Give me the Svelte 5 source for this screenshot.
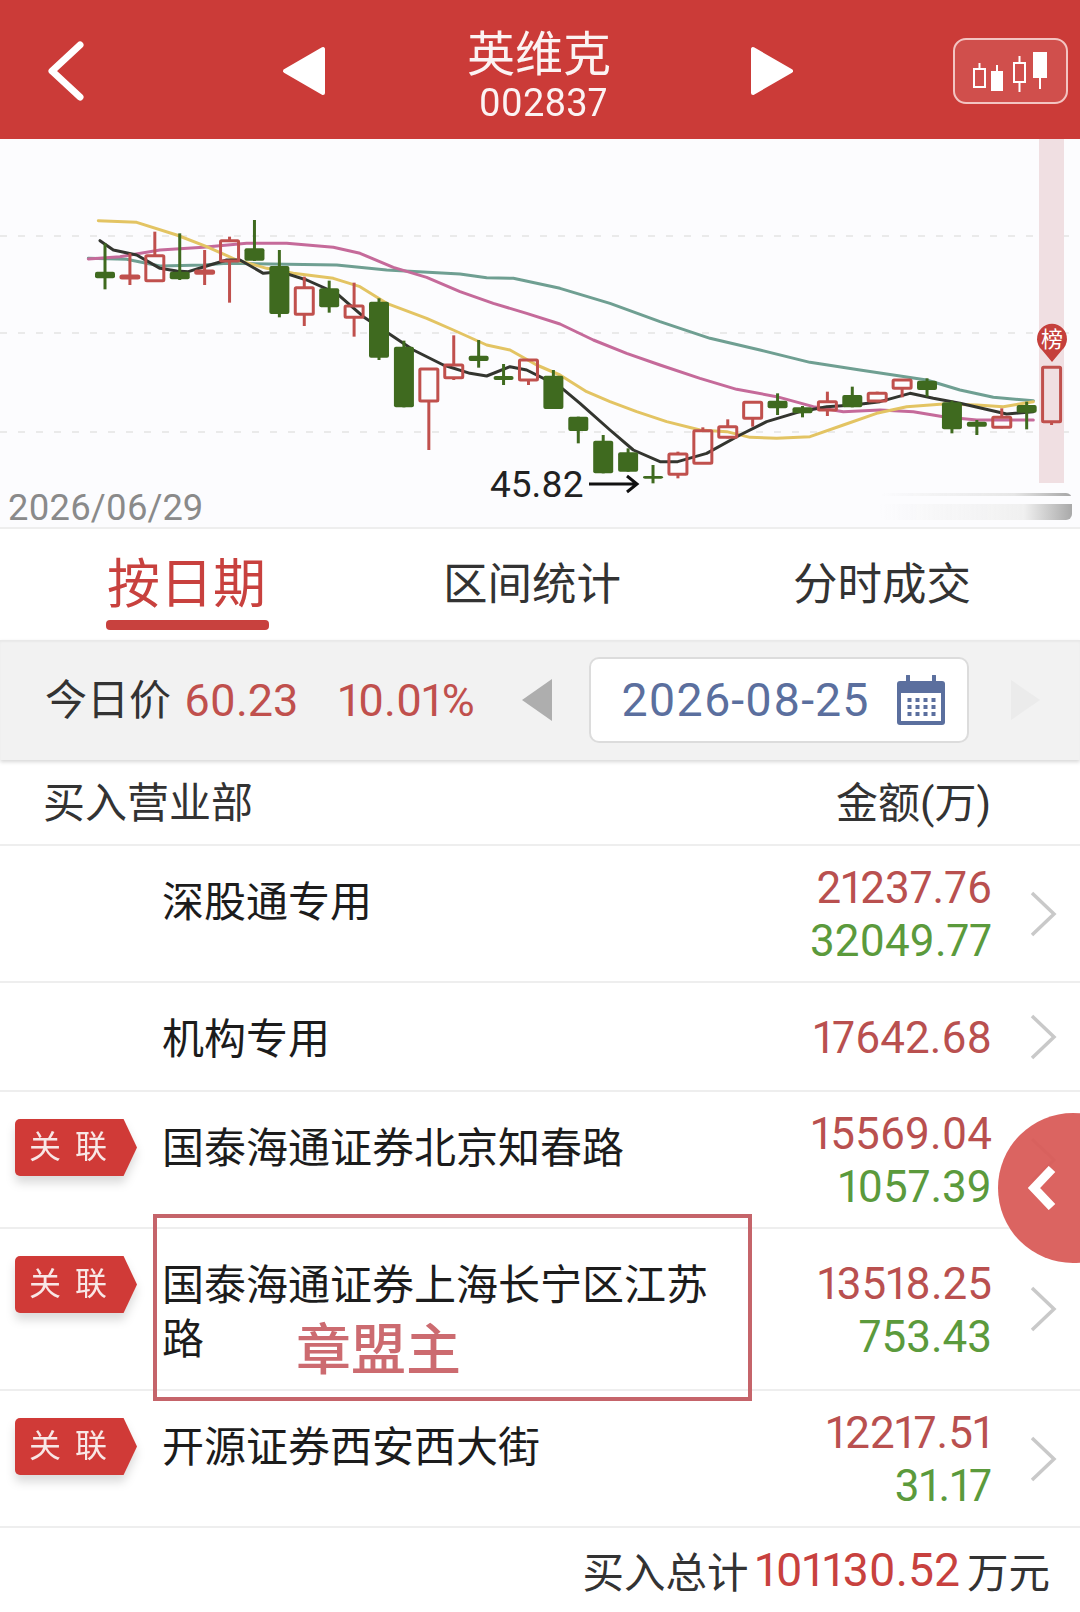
<script>
    // candle values are [wickTop, wickBottom, bodyTop, bodyBottom, up]
    // measured in 3x crop space, toY() brings them back to page pixels
    const toY = (v) => 190 + v / 3;
    const leftX = (v) => 60 + v / 3;
    const rightX = (v) => 560 + v / 3;

    const raw = [
        [160, 298, 245, 265, 0], [190, 285, 258, 264, 1], [125, 275, 197, 272, 1], [130, 270, 245, 268, 0],
        [180, 285, 243, 250, 1], [140, 338, 152, 213, 1], [90, 213, 175, 212, 0], [180, 382, 228, 372, 0],
        [260, 408, 293, 373, 1], [272, 368, 295, 352, 0], [278, 440, 348, 382, 1], [325, 510, 335, 503, 0],
        [452, 652, 470, 652, 0], [535, 780, 537, 633, 1], [436, 570, 525, 563, 1], [450, 533, 497, 513, 0],
        [522, 585, 558, 570, 0], [508, 585, 510, 570, 1], [540, 657, 557, 657, 0], [680, 760, 680, 723, 0],
        [735, 850, 752, 850, 0], [775, 845, 787, 845, 0], [825, 880, 858, 866, 0], [785, 865, 792, 853, 1],
        [712, 820, 722, 820, 1], [688, 745, 710, 742, 1], [635, 710, 637, 685, 1], [610, 675, 632, 655, 0],
        [648, 682, 652, 670, 0], [605, 678, 635, 660, 1], [590, 652, 615, 652, 0], [605, 637, 610, 633, 1],
        [568, 622, 570, 595, 1], [565, 620, 572, 600, 0], [632, 730, 637, 718, 0], [690, 735, 695, 710, 0],
        [655, 715, 682, 712, 1], [635, 718, 645, 668, 0], [530, 705, 532, 695, 1]
    ];

    const candles = raw.map((c, i) => ({
        x: 105 + i * 24.91,
        top: toY(c[0]),
        bottom: toY(c[1]),
        bodyTop: toY(c[2]),
        bodyBottom: toY(c[3]),
        up: c[4] === 1
    }));

    function line(left, right) {
        const a = left.map(([x, y]) => `${leftX(x)},${toY(y)}`);
        const b = right.map(([x, y]) => `${rightX(x)},${toY(y)}`);
        return a.concat(b).join(' ');
    }

    const averages = [
        {
            color: '#6f9f92',
            points: line(
                [[85, 205], [200, 208], [300, 228], [430, 225], [500, 220], [830, 225], [980, 240], [1200, 252], [1280, 263], [1360, 265]],
                [[0, 295], [150, 340], [300, 395], [450, 445], [600, 480], [750, 517], [900, 540], [1100, 570], [1200, 600], [1300, 622], [1420, 632]]
            )
        },
        {
            color: '#c56a9a',
            points: line(
                [[85, 207], [180, 200], [300, 180], [430, 172], [560, 160], [680, 160], [820, 172], [900, 190], [1000, 232], [1100, 262], [1200, 305], [1300, 340], [1400, 370]],
                [[0, 402], [100, 450], [200, 490], [300, 525], [420, 565], [530, 598], [650, 620], [760, 650], [850, 665], [960, 660], [1060, 665], [1150, 680], [1250, 690], [1420, 690]]
            )
        },
        {
            color: '#e3c463',
            points: line(
                [[115, 92], [230, 97], [350, 135], [440, 170], [530, 210], [620, 235], [700, 250], [820, 265], [900, 290], [980, 340], [1100, 385], [1180, 420], [1280, 465], [1350, 480], [1430, 525]],
                [[0, 555], [80, 605], [150, 635], [230, 665], [320, 695], [420, 720], [500, 725], [570, 742], [650, 745], [750, 740], [850, 705], [950, 670], [1040, 650], [1150, 642], [1250, 645], [1330, 650], [1420, 635]]
            )
        },
        {
            color: '#33352f',
            points: line(
                [[120, 152], [160, 180], [230, 195], [300, 235], [350, 243], [385, 245], [440, 228], [500, 210], [540, 210], [610, 250], [660, 245], [740, 270], [830, 310], [910, 380], [985, 430], [1060, 480], [1150, 525], [1230, 550], [1280, 558], [1350, 530], [1400, 540]],
                [[0, 590], [60, 640], [150, 720], [220, 780], [300, 815], [353, 815], [440, 790], [540, 735], [620, 695], [720, 665], [800, 650], [880, 645], [960, 635], [1050, 610], [1120, 625], [1200, 640], [1340, 672], [1420, 665]]
            )
        }
    ];

    const gridLines = [236, 333, 432];

    const rows = [
        { name: '深股通专用', tag: false, buy: '21237.76', sell: '32049.77', kind: 'double' },
        { name: '机构专用', tag: false, buy: '17642.68', sell: '', kind: 'single' },
        { name: '国泰海通证券北京知春路', tag: true, buy: '15569.04', sell: '1057.39', kind: 'double' },
        { name: '国泰海通证券上海长宁区江苏路', tag: true, buy: '13518.25', sell: '753.43', kind: 'wrap', note: '章盟主' },
        { name: '开源证券西安西大街', tag: true, buy: '12217.51', sell: '31.17', kind: 'double' }
    ];
</script>

<div class="page">
    <header class="topbar">
        <svg class="back" width="42" height="60" viewBox="0 0 42 60">
            <path d="M35 4 L7 30 L35 56" fill="none" stroke="#fff" stroke-width="7" stroke-linecap="round" stroke-linejoin="round" />
        </svg>
        <svg class="prev" width="44" height="52" viewBox="0 0 44 52">
            <path d="M41 4 V48 L3 26 Z" fill="#fff" stroke="#fff" stroke-width="4" stroke-linejoin="round" />
        </svg>
        <div class="title">
            <div class="stock-name">英维克</div>
            <div class="stock-code">002837</div>
        </div>
        <svg class="next" width="44" height="52" viewBox="0 0 44 52">
            <path d="M3 4 V48 L41 26 Z" fill="#fff" stroke="#fff" stroke-width="4" stroke-linejoin="round" />
        </svg>
        <div class="kline-btn">
            <svg width="76" height="42" viewBox="0 0 76 42">
                <g fill="none" stroke="#fff" stroke-width="2">
                    <rect x="1" y="18" width="11" height="18" />
                    <path d="M6.500 12 V18" />
                    <path d="M24 14 V20" />
                    <rect x="41" y="12" width="11" height="19" />
                    <path d="M46.500 5 V12 M46.500 31 V41" />
                    <path d="M67 26 V38" />
                </g>
                <rect x="18" y="20" width="12" height="20" fill="#fff" />
                <rect x="60" y="1" width="14" height="26" fill="#fff" />
            </svg>
        </div>
    </header>

    <div class="chart">
        <svg width="1080" height="390" viewBox="0 139 1080 390">
            {#each gridLines as y}
                <line x1="0" x2="1080" y1={y} y2={y} stroke="#e4e4e4" stroke-width="1.500" stroke-dasharray="7 11" />
            {/each}
            <rect x="1039" y="139" width="25" height="344" fill="#f0dfe2" />

            {#each averages as avg}
                <polyline points={avg.points} fill="none" stroke={avg.color} stroke-width="3" stroke-linejoin="round" stroke-linecap="round" />
            {/each}

            {#each candles as c}
                {#if c.up}
                    <line x1={c.x} x2={c.x} y1={c.top} y2={c.bodyTop} stroke="#c0504d" stroke-width="3" />
                    <line x1={c.x} x2={c.x} y1={c.bodyBottom} y2={c.bottom} stroke="#c0504d" stroke-width="3" />
                    <rect x={c.x - 9} y={c.bodyTop} width="18" height={c.bodyBottom - c.bodyTop} fill="none" stroke="#c0504d" stroke-width="3" rx="1" />
                {:else}
                    <line x1={c.x} x2={c.x} y1={c.top} y2={c.bottom} stroke="#3f6a1f" stroke-width="3" />
                    <rect x={c.x - 10} y={c.bodyTop} width="20" height={c.bodyBottom - c.bodyTop} fill="#3f6a1f" rx="2" />
                {/if}
            {/each}

            <path d="M1052 362 L1042 350 A15 15 0 1 1 1062 350 Z" fill="#c5403c" />
            <text x="1052" y="347" class="pin-text" text-anchor="middle">榜</text>

            <text x="8" y="520" class="date-label">2026/06/29</text>
            <text x="490" y="497" class="low-label">45.82</text>
            <path d="M589 484 H636 M627 476 L637 484 L627 492" fill="none" stroke="#111" stroke-width="3" />
        </svg>
        <div class="smudge"></div>
    </div>

    <nav class="tabs">
        <div class="tab active">按日期<span class="underline"></span></div>
        <div class="tab second">区间统计</div>
        <div class="tab third">分时成交</div>
    </nav>

    <div class="pricebar">
        <span class="price-label">今日价</span>
        <span class="price">60.23</span>
        <span class="pct">10.01%</span>
        <svg class="date-prev" width="32" height="44" viewBox="0 0 32 44">
            <path d="M31 1 V43 L1 22 Z" fill="#aeaeae" />
        </svg>
        <div class="datebox">
            <span class="date-text">2026-08-25</span>
            <svg width="48" height="50" viewBox="0 0 48 50">
                <rect x="0" y="6" width="48" height="44" rx="3" fill="#5b6f9e" />
                <rect x="4" y="18" width="40" height="28" fill="#fff" />
                <path d="M11 1 V11 M37 1 V11" stroke="#5b6f9e" stroke-width="4" stroke-linecap="round" />
                <g fill="#5b6f9e">
                    {#each [12, 20, 28, 36] as x}
                        {#each [23, 30, 37] as y}
                            <rect x={x - 1.500} {y} width="4" height="4" />
                        {/each}
                    {/each}
                </g>
            </svg>
        </div>
        <svg class="date-next" width="32" height="42" viewBox="0 0 32 42">
            <path d="M2 1 V41 L31 21 Z" fill="#ebebeb" />
        </svg>
    </div>

    <div class="listhead">
        <span>买入营业部</span>
        <span>金额(万)</span>
    </div>

    {#each rows as row}
        <div class="row {row.kind}">
            <div class="tagcol">
                {#if row.tag}
                    <div class="tagshadow"><div class="tag">关 联</div></div>
                {/if}
            </div>
            <div class="name">{row.name}</div>
            <div class="amounts">
                <div class="buy">{row.buy}</div>
                {#if row.sell}
                    <div class="sell">{row.sell}</div>
                {/if}
            </div>
            <div class="more">
                <svg width="28" height="46" viewBox="0 0 28 46">
                    <path d="M3 2 L25 23 L3 44" fill="none" stroke="#c9c9c9" stroke-width="3.500" />
                </svg>
            </div>
            {#if row.note}
                <div class="annotation"><span>{row.note}</span></div>
            {/if}
        </div>
    {/each}

    <footer class="total">
        <span>买入总计</span>
        <span class="total-num">101130.52</span>
        <span>万元</span>
    </footer>

    <div class="drawer">
        <svg width="30" height="44" viewBox="0 0 30 44">
            <path d="M25 3 L7 22 L25 41" fill="none" stroke="#fff" stroke-width="9" />
        </svg>
    </div>
</div>

<style>
    :global(body) {
        background: #fff;
    }

    .page {
        position: relative;
        width: 1080px;
        height: 1612px;
        overflow: hidden;
        background: #fff;
        color: #2b2b2b;
        font-family: Roboto, "Noto Sans CJK SC", sans-serif;
        font-variant-numeric: proportional-nums;
    }

    .topbar {
        position: relative;
        height: 139px;
        background: #cb3b38;
        display: flex;
        align-items: center;
        color: #fff;
    }

    .back {
        margin-left: 45px;
        margin-top: 2px;
    }

    .prev {
        margin-left: 195px;
        margin-top: 2px;
    }

    .title {
        width: 400px;
        margin-left: 13px;
        padding-top: 13px;
        text-align: center;
    }

    .stock-name {
        font-size: 48px;
        line-height: 54px;
        opacity: 0.94;
    }

    .stock-code {
        font-size: 38px;
        line-height: 43px;
        opacity: 0.94;
        padding-left: 8px;
    }

    .next {
        margin-left: 11px;
        margin-top: 2px;
    }

    .kline-btn {
        margin-left: 159px;
        margin-top: 2px;
        width: 115px;
        height: 66px;
        box-sizing: border-box;
        border: 2px solid #f3c4c2;
        border-radius: 13px;
        background: #d04f4c;
        display: flex;
        align-items: center;
        justify-content: center;
        padding-top: 2px;
    }

    .chart {
        position: relative;
        height: 390px;
        background: #fcfcfe;
        border-bottom: 2px solid #eeeeee;
        box-sizing: border-box;
    }

    .chart svg {
        display: block;
    }

    .pin-text {
        font-size: 22px;
        fill: #fff;
    }

    .date-label {
        font-size: 36.300px;
        fill: #8a8a8a;
    }

    .low-label {
        font-size: 37px;
        fill: #222;
    }

    .smudge {
        position: absolute;
        left: 880px;
        top: 354px;
        width: 192px;
        height: 27px;
        border-radius: 6px;
        background:
            linear-gradient(90deg, rgba(235, 235, 235, 0), #e6e6e6 70%, #a6a6a6) 0 0 / 100% 3px no-repeat,
            linear-gradient(90deg, rgba(240, 240, 240, 0), #f0f0f0 75%, #a9a9a9) 0 100% / 100% 16px no-repeat;
    }

    .tabs {
        position: relative;
        height: 111px;
        display: flex;
        align-items: center;
        font-size: 44.500px;
        color: #333;
    }

    .tab {
        position: relative;
        white-space: nowrap;
        margin-top: -9px;
    }

    .tab.active {
        margin-left: 107px;
        font-size: 53px;
        line-height: 64px;
        margin-top: 0;
        color: #c8413e;
    }

    .underline {
        position: absolute;
        left: -1px;
        right: -3px;
        top: 67px;
        height: 10px;
        border-radius: 4px;
        background: #c8413e;
    }

    .second {
        margin-left: 177px;
    }

    .third {
        margin-left: 172px;
    }

    .pricebar {
        height: 120px;
        background: #f2f2f2;
        display: flex;
        align-items: center;
        box-shadow: 0 2px 4px rgba(0, 0, 0, 0.16), inset 0 2px 2px rgba(0, 0, 0, 0.04);
        position: relative;
        font-size: 45px;
    }

    .price-label {
        margin-left: 45px;
        margin-top: -8px;
        font-size: 42px;
        color: #333;
    }

    .price {
        margin-left: 13px;
        color: #c0504d;
    }

    .pct {
        margin-left: 40px;
        width: 140px;
        color: #c0504d;
    }

    .date-prev {
        margin-left: 43px;
    }

    .datebox {
        margin-left: 36px;
        width: 380px;
        height: 86px;
        box-sizing: border-box;
        background: #fff;
        border: 2px solid #dcdcdc;
        border-radius: 10px;
        display: flex;
        align-items: center;
        padding-left: 30px;
        gap: 28px;
        color: #5b6f9e;
    }

    .date-text {
        width: 248px;
        font-size: 46.500px;
        white-space: nowrap;
        letter-spacing: 1px;
    }

    .date-next {
        margin-left: 40px;
    }

    .listhead {
        height: 86px;
        display: flex;
        justify-content: space-between;
        align-items: center;
        box-sizing: border-box;
        padding: 0 89px 5px 43px;
        font-size: 42px;
        color: #333;
        border-bottom: 2px solid #eeeeee;
    }

    .row {
        position: relative;
        display: flex;
        box-sizing: border-box;
        border-bottom: 2px solid #eeeeee;
    }

    .row.double {
        height: 137px;
    }

    .row.single {
        height: 109px;
    }

    .row.wrap {
        height: 162px;
    }

    .tagcol {
        width: 162px;
        flex: none;
    }

    .tagshadow {
        margin: 27px 0 0 15px;
        width: 122px;
        filter: drop-shadow(0 7px 5px rgba(0, 0, 0, 0.14));
    }

    .tag {
        height: 57px;
        border-radius: 5px;
        background: #d03a37;
        color: #f8e7e6;
        font-size: 32px;
        line-height: 57px;
        padding-left: 14px;
        word-spacing: 6px;
        clip-path: polygon(0 0, 89% 0, 100% 50%, 89% 100%, 0 100%);
    }

    .name {
        width: 571px;
        flex: none;
        padding-top: 30px;
        font-size: 42px;
        line-height: 54px;
        color: #1c1c1c;
    }

    .amounts {
        flex: 1;
        align-self: center;
        text-align: right;
        font-size: 44px;
        line-height: 53px;
        padding-top: 3px;
    }

    .wrap .amounts {
        padding-top: 4px;
    }

    .buy {
        color: #b9504f;
    }

    .sell {
        color: #5b9a3c;
    }

    .more {
        flex: none;
        width: 88px;
        display: flex;
        align-items: center;
        justify-content: flex-end;
        padding-right: 23px;
        box-sizing: border-box;
    }

    .annotation {
        position: absolute;
        left: 153px;
        top: -15px;
        width: 599px;
        height: 187px;
        box-sizing: border-box;
        border: 4px solid #c5646a;
        z-index: 2;
    }

    .annotation span {
        position: absolute;
        left: 139px;
        top: 100px;
        font-size: 55px;
        line-height: 64px;
        font-weight: 500;
        color: #cc6b70;
    }

    .total {
        height: 83px;
        display: flex;
        justify-content: flex-end;
        align-items: center;
        gap: 7px;
        padding-right: 30px;
        font-size: 41.500px;
        color: #333;
    }

    .total-num {
        font-size: 46.300px;
        color: #c8413e;
    }

    .drawer {
        position: absolute;
        left: 998px;
        top: 1113px;
        width: 150px;
        height: 150px;
        border-radius: 50%;
        background: rgba(217, 92, 88, 0.95);
        display: flex;
        align-items: center;
        padding-left: 29px;
        box-sizing: border-box;
    }
</style>
